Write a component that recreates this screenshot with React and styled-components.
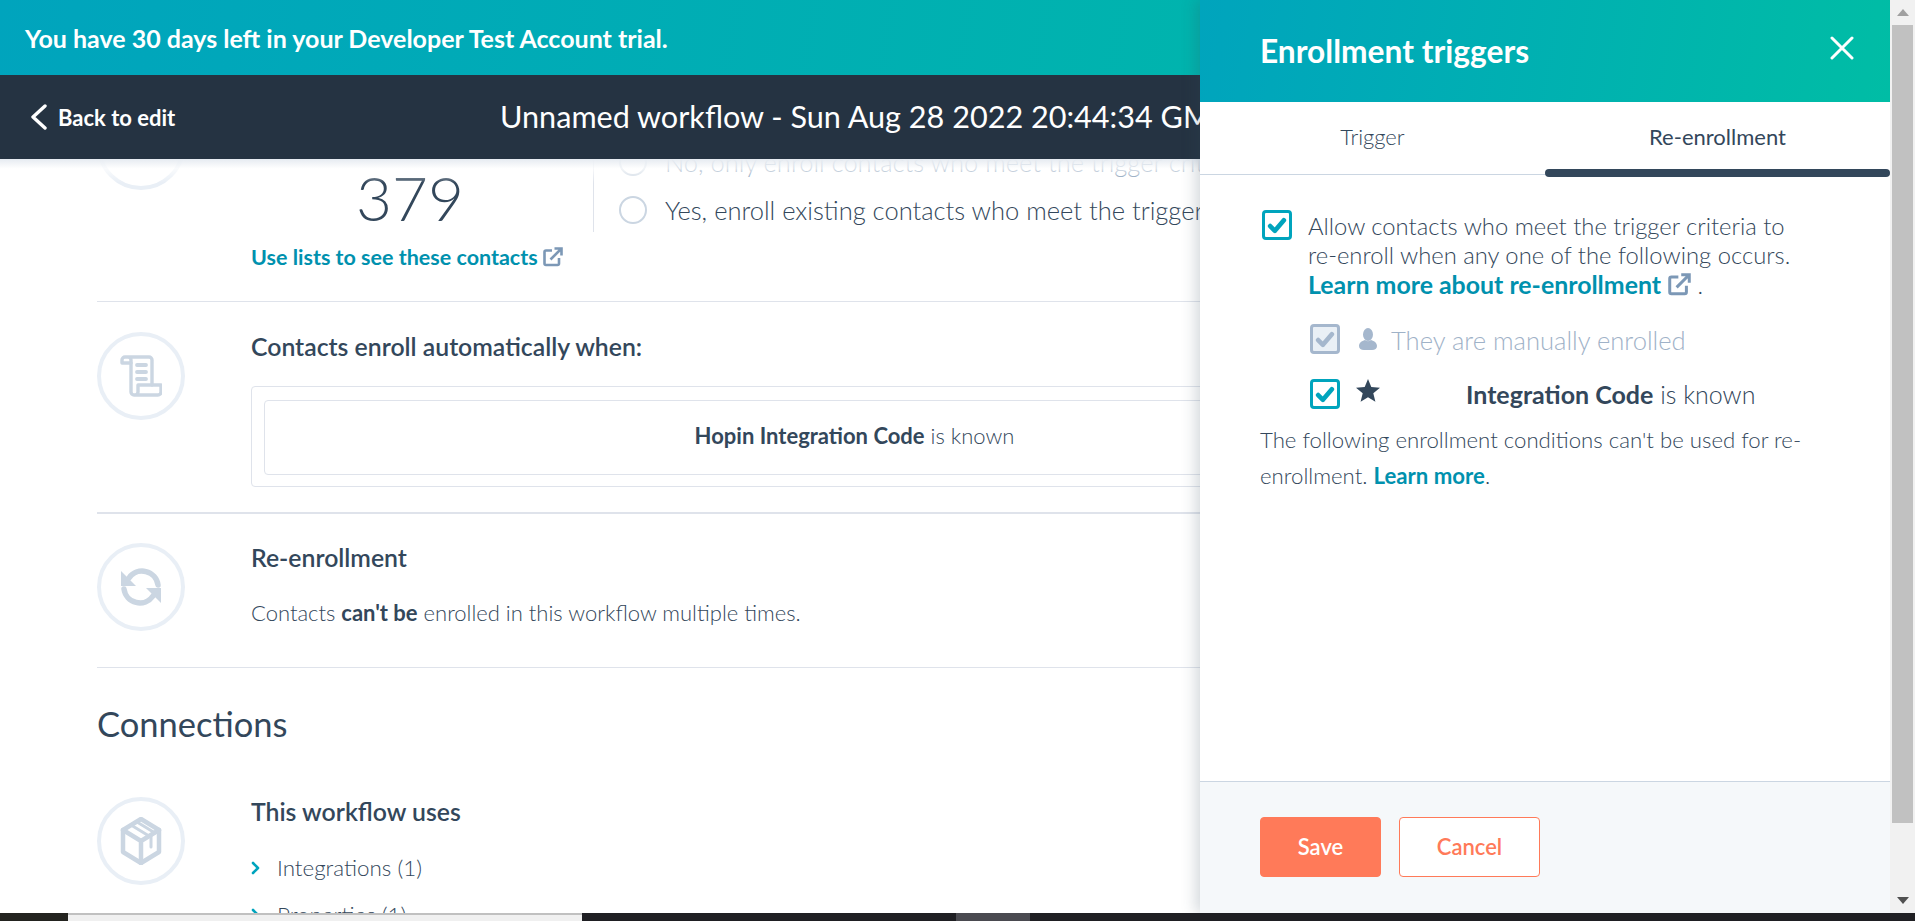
import React from 'react';
import styled, { createGlobalStyle } from 'styled-components';

const GlobalStyle = createGlobalStyle`
  html, body {
    margin: 0;
    padding: 0;
    overflow: hidden;
    background: #fff;
  }
  * { box-sizing: border-box; }
`;

const fontStack = `Lato, "Noto Sans", "Liberation Sans", sans-serif`;

const Page = styled.div`
  width: 1915px;
  height: 921px;
  display: flex;
  flex-direction: column;
  overflow: hidden;
  font-family: ${fontStack};
  color: #33475b;
`;

const Viewport = styled.div`
  flex: 1;
  min-height: 0;
  display: flex;
`;

const Main = styled.div`
  position: relative;
  flex: 1;
  min-width: 0;
  display: flex;
  flex-direction: column;
  overflow: hidden;
`;

const Banner = styled.div`
  height: 75px;
  flex: none;
  display: flex;
  align-items: center;
  padding-left: 25px;
  background: linear-gradient(100deg, #00a4bd 0%, #00bda5 100%);
  color: #fff;
  font-size: 25px;
  font-weight: 700;
`;

const NavBar = styled.div`
  height: 84px;
  flex: none;
  margin-right: 690px;
  display: flex;
  align-items: center;
  padding-left: 31px;
  background: #253342;
  color: #fff;
  overflow: hidden;
  white-space: nowrap;
`;

const BackLink = styled.a`
  width: 469px;
  flex: none;
  display: flex;
  align-items: center;
  gap: 11px;
  font-size: 22px;
  font-weight: 700;
`;

const NavTitle = styled.div`
  font-size: 30.6px;
  font-weight: 400;
  margin-top: -2px;
`;

const ScrollArea = styled.div`
  position: relative;
  flex: 1;
  min-height: 0;
  overflow: hidden;
`;

const TopFade = styled.div`
  position: absolute;
  top: 0;
  left: 0;
  right: 0;
  height: 24px;
  background: linear-gradient(#e6ebf1 0%, rgba(255, 255, 255, 0.75) 40%, rgba(255, 255, 255, 0) 100%);
`;

/* the page is scrolled down a little in the reference */
const ScrollContent = styled.div`
  margin-top: -57px;
  margin-left: 97px;
  width: 1361px;
`;

const Section = styled.div`
  display: grid;
  grid-template-columns: 88px 1fr;
  column-gap: 66px;
  padding: ${({ $pad }) => $pad};
  border-bottom: ${({ $line }) => ($line ? `${$line}px solid #dfe3eb` : 'none')};
`;

const IconCircle = styled.div`
  width: 88px;
  height: 88px;
  border-radius: 50%;
  border: 4px solid #e9eff6;
  display: flex;
  align-items: center;
  justify-content: center;
  color: #cbd6e2;
`;

const StatRow = styled.div`
  display: flex;
  align-items: flex-start;
`;

const StatColumn = styled.div`
  width: 342px;
  flex: none;
  display: flex;
  flex-direction: column;
`;

const StatNumber = styled.div`
  width: 318px;
  text-align: center;
  font-size: 62px;
  font-weight: 300;
  line-height: 72px;
  margin-top: 59px;
`;

const TextLink = styled.a`
  color: #0091ae;
  font-size: ${({ $size }) => ($size ? `${$size}px` : 'inherit')};
  font-weight: 700;
`;

const StatLink = styled(TextLink)`
  display: flex;
  align-items: center;
  gap: 5px;
  line-height: 26px;
  margin-top: 11px;
  white-space: nowrap;
`;

const RadioColumn = styled.div`
  width: 607px;
  height: 130px;
  flex: none;
  overflow: hidden;
  border-left: 1px solid #dfe3eb;
  padding: 45px 0 0 25px;
  display: flex;
  flex-direction: column;
  gap: 18px;
`;

const RadioRow = styled.div`
  display: flex;
  align-items: center;
  gap: 18px;
  font-size: 25.5px;
  font-weight: 300;
  line-height: 30px;
  white-space: nowrap;
  color: ${({ $muted }) => ($muted ? '#6f8ba9' : '#33475b')};
`;

const Radio = styled.span`
  width: 28px;
  height: 28px;
  flex: none;
  border-radius: 50%;
  border: 2px solid #cbd6e2;
  background: #fff;
`;

const SectionBody = styled.div`
  min-width: 0;
`;

const SectionTitle = styled.div`
  font-size: 24.8px;
  font-weight: 600;
  line-height: 30px;
`;

const OuterBox = styled.div`
  margin-top: 24px;
  border: 1px solid #dfe3eb;
  border-radius: 4px;
  padding: 13px 12px 11px;
`;

const InnerBox = styled.div`
  height: 75px;
  border: 1px solid #dfe3eb;
  border-radius: 4px;
  padding-bottom: 5px;
  display: flex;
  align-items: center;
  justify-content: center;
  font-size: 22px;
  font-weight: 300;
`;

const Strong = styled.b`
  font-weight: 700;
`;

const BodyLine = styled.div`
  margin-top: 25px;
  font-size: 22px;
  font-weight: 300;
  line-height: 30px;
`;

const ConnectionsTitle = styled.h2`
  margin: 0;
  padding: 38px 0 55px;
  font-size: 34.5px;
  font-weight: 400;
  line-height: 36px;
`;

const TreeList = styled.div`
  margin-top: 26px;
  display: flex;
  flex-direction: column;
  gap: 17px;
`;

const TreeRow = styled.div`
  display: flex;
  align-items: center;
  gap: 17px;
  font-size: 22.4px;
  font-weight: 300;
  line-height: 30px;
  color: #33475b;
`;

const TreeChevron = styled.svg`
  width: 9px;
  height: 14px;
  color: #00a4bd;
`;

const Panel = styled.div`
  position: absolute;
  top: 0;
  right: 0;
  bottom: 0;
  width: 690px;
  display: flex;
  flex-direction: column;
  background: #fff;
  box-shadow: -4px 0 14px rgba(51, 71, 91, 0.22);
`;

const PanelHeader = styled.div`
  height: 102px;
  flex: none;
  display: flex;
  align-items: center;
  justify-content: space-between;
  padding: 0 36px 0 60px;
  background: linear-gradient(100deg, #00a4bd 0%, #00bda5 100%);
  color: #fff;
`;

const PanelTitle = styled.div`
  font-size: 31.7px;
  font-weight: 700;
`;

const CloseIcon = styled.svg`
  width: 24px;
  height: 24px;
  margin-top: -6px;
`;

const Tabs = styled.div`
  height: 73px;
  flex: none;
  display: flex;
  border-bottom: 1px solid #cbd6e2;
`;

const Tab = styled.div`
  position: relative;
  flex: 1;
  display: flex;
  align-items: center;
  justify-content: center;
  padding-bottom: 4px;
  font-size: 22px;
  font-weight: ${({ $active }) => ($active ? 400 : 300)};
  color: #33475b;

  ${({ $active }) => $active && `
    &::after {
      content: '';
      position: absolute;
      left: 0;
      right: 0;
      bottom: -3px;
      height: 8px;
      border-radius: 4px;
      background: #33475b;
    }
  `}
`;

const PanelBody = styled.div`
  flex: 1;
  min-height: 0;
  padding: 35px 60px 0;
`;

const CheckRow = styled.div`
  display: flex;
  align-items: flex-start;
  margin-left: ${({ $offset }) => $offset || 0}px;
`;

const Check = styled.span`
  width: 30px;
  height: 30px;
  flex: none;
  display: flex;
  align-items: center;
  justify-content: center;
  border-radius: 4px;
  border: 3px solid ${({ $disabled }) => ($disabled ? '#a5b7cd' : '#00a4bd')};
  background: ${({ $disabled }) => ($disabled ? '#eaf0f6' : '#fff')};
  color: ${({ $disabled }) => ($disabled ? '#a5b7cd' : '#00a4bd')};
`;

const AllowText = styled.div`
  margin: 2px 0 0 16px;
  font-size: 23.8px;
  font-weight: 300;
  line-height: 29px;
  white-space: nowrap;
`;

const ExternalIcon = styled.svg`
  width: ${({ $size }) => $size}px;
  height: ${({ $size }) => $size}px;
  flex: none;
  color: #7c98b6;
  vertical-align: -2px;
  margin-left: ${({ $gap }) => $gap || 0}px;
`;

const SubOptions = styled.div`
  margin: 24px 0 0 50px;
  display: flex;
  flex-direction: column;
  gap: 24px;
`;

const RowIcon = styled.span`
  width: 24px;
  margin: ${({ $top }) => $top || 0}px 0 0 16px;
  flex: none;
  display: flex;
  justify-content: center;
  color: ${({ $disabled }) => ($disabled ? '#a5b7cd' : '#33475b')};
`;

const OptionLabel = styled.div`
  font-size: ${({ $size }) => $size}px;
  font-weight: 300;
  line-height: 30px;
  color: ${({ $disabled }) => ($disabled ? '#9fb2c8' : '#33475b')};
  margin-left: ${({ $indent }) => $indent}px;
  margin-top: ${({ $top }) => $top}px;
  white-space: nowrap;
`;

const Note = styled.p`
  margin: 13px 0 0;
  font-size: 22.2px;
  font-weight: 300;
  line-height: 36px;
  width: 570px;
`;

const PanelFooter = styled.div`
  height: 132px;
  flex: none;
  display: flex;
  align-items: center;
  gap: 18px;
  padding: 0 60px 2px;
  background: #f5f8fa;
  border-top: 1px solid #cbd6e2;
`;

const Button = styled.button`
  height: 60px;
  width: ${({ $width }) => $width}px;
  padding: 0;
  border-radius: 4px;
  border: 1px solid #ff7a59;
  background: ${({ $primary }) => ($primary ? '#ff7a59' : '#fff')};
  color: ${({ $primary }) => ($primary ? '#fff' : '#ff7a59')};
  font-family: ${fontStack};
  font-size: 22px;
  font-weight: 600;
`;

const Scrollbar = styled.div`
  width: 25px;
  flex: none;
  display: flex;
  flex-direction: column;
  align-items: center;
  background: #f1f1f1;
`;

const ScrollArrow = styled.div`
  height: 25px;
  flex: none;
  display: flex;
  align-items: center;
  justify-content: center;
`;

const ScrollThumb = styled.div`
  width: 21px;
  height: 798px;
  flex: none;
  background: #c1c1c1;
`;

const ScrollSpacer = styled.div`
  flex: 1;
`;

const Taskbar = styled.div`
  height: 8px;
  flex: none;
  display: flex;
  background: #1f1f23;
`;

const TaskItem = styled.div`
  width: ${({ $width }) => $width}px;
  margin-left: ${({ $left }) => $left || 0}px;
  background: ${({ $bg }) => $bg};
  border-top: ${({ $edge }) => ($edge ? '2px solid #c0c0c0' : 'none')};
`;

const External = ({ size, gap }) => (
  <ExternalIcon $size={size} $gap={gap} viewBox="0 0 20 20" fill="none" stroke="currentColor" strokeWidth="2.6">
    <path d="M9 3.500H3a1.500 1.500 0 0 0-1.500 1.500v11.500A1.500 1.500 0 0 0 3 18h11.500a1.500 1.500 0 0 0 1.500-1.500V11" />
    <path d="M7.500 12.500 18 2M11.500 1.500H18.500V8.500" />
  </ExternalIcon>
);

const Tick = () => (
  <svg width="20" height="17" viewBox="0 0 19 16" fill="none" stroke="currentColor" strokeWidth="4.4" strokeLinecap="round" strokeLinejoin="round">
    <path d="M3 8.500 7.500 13 16 3" />
  </svg>
);

const Chevron = () => (
  <TreeChevron viewBox="0 0 9 14" fill="none" stroke="currentColor" strokeWidth="2.6" strokeLinecap="round" strokeLinejoin="round">
    <path d="M2 2l5 5-5 5" />
  </TreeChevron>
);

const ScrollIcon = () => (
  <svg width="42" height="42" viewBox="0 0 42 42" fill="none" stroke="currentColor" strokeWidth="3.4" strokeLinejoin="round" strokeLinecap="round">
    <path d="M5 2h24a3 3 0 0 1 3 3v25M5 2a3 3 0 0 0-3 3v3h9V5a3 3 0 0 0-3-3" />
    <path d="M11 8v29a3 3 0 0 0 3 3h24a3 3 0 0 0 3-3v-7H18v7a3 3 0 0 1-3 3" />
    <path d="M17 10h9M17 17h9M17 24h9" strokeWidth="3.800" />
  </svg>
);

const RefreshIcon = () => (
  <svg width="42" height="42" viewBox="0 0 42 42" fill="none" stroke="currentColor" strokeWidth="5.500" strokeLinecap="round">
    <path d="M9 12a16 16 0 0 1 29 7" />
    <path d="M33 30a16 16 0 0 1-29-7" />
    <path d="M1 5v15h15z" fill="currentColor" stroke="none" />
    <path d="M41 37V22H26z" fill="currentColor" stroke="none" />
  </svg>
);

const BoxIcon = () => (
  <svg width="42" height="48" viewBox="0 0 42 48" fill="none" stroke="currentColor" strokeWidth="4.500" strokeLinejoin="round" strokeLinecap="round">
    <path d="M21 2 39 13v22L21 46 3 35V13z" />
    <path d="M3 13l18 11 18-11M21 24v22" />
    <path d="M11 8l18 11M17 5l18 11" strokeWidth="3" />
    <path d="M31 19v11" strokeWidth="3" />
  </svg>
);

const PersonIcon = () => (
  <svg width="18" height="22" viewBox="0 0 18 22" fill="currentColor">
    <ellipse cx="9" cy="6.500" rx="5" ry="6.500" />
    <path d="M6 12c-3.500 1-6 3-6 6 0 2.500 2 4 5 4h8c3 0 5-1.500 5-4 0-3-2.500-5-6-6-1.500 1.500-4.500 1.500-6 0z" />
  </svg>
);

const StarIcon = () => (
  <svg width="24" height="23" viewBox="0 0 24 23" fill="currentColor">
    <path d="M12 0l3.300 8.100 8.700.6-6.700 5.600 2.100 8.500L12 18.200 4.600 22.800l2.100-8.500L0 8.700l8.700-.6z" />
  </svg>
);

export default function App() {
  return (
    <Page>
      <GlobalStyle />
      <Viewport>
        <Main>
          <Banner>You have 30 days left in your Developer Test Account trial.</Banner>
          <NavBar>
            <BackLink>
              <svg width="16" height="26" viewBox="0 0 16 26" fill="none" stroke="#fff" strokeWidth="3.400" strokeLinecap="round" strokeLinejoin="round">
                <path d="M14 2 2 13l12 11" />
              </svg>
              Back to edit
            </BackLink>
            <NavTitle>Unnamed workflow - Sun Aug 28 2022 20:44:34 GMT+0100 (British Summer Time)</NavTitle>
          </NavBar>
          <ScrollArea>
            <ScrollContent>
              <Section $line={1} $pad="0 0 31px">
                <IconCircle />
                <StatRow>
                  <StatColumn>
                    <StatNumber>379</StatNumber>
                    <StatLink $size={21.5}>
                      Use lists to see these contacts
                      <External size={20} />
                    </StatLink>
                  </StatColumn>
                  <RadioColumn>
                    <RadioRow $muted>
                      <Radio />
                      No, only enroll contacts who meet the trigger criteria going forward
                    </RadioRow>
                    <RadioRow>
                      <Radio />
                      Yes, enroll existing contacts who meet the trigger criteria as of now
                    </RadioRow>
                  </RadioColumn>
                </StatRow>
              </Section>
              <Section $line={2} $pad="30px 0 25px">
                <IconCircle>
                  <ScrollIcon />
                </IconCircle>
                <SectionBody>
                  <SectionTitle>Contacts enroll automatically when:</SectionTitle>
                  <OuterBox>
                    <InnerBox>
                      <span>
                        <Strong>Hopin Integration Code</Strong> is known
                      </span>
                    </InnerBox>
                  </OuterBox>
                </SectionBody>
              </Section>
              <Section $line={1} $pad="29px 0 36px">
                <IconCircle>
                  <RefreshIcon />
                </IconCircle>
                <SectionBody>
                  <SectionTitle>Re-enrollment</SectionTitle>
                  <BodyLine>
                    Contacts <Strong>can't be</Strong> enrolled in this workflow multiple times.
                  </BodyLine>
                </SectionBody>
              </Section>
              <ConnectionsTitle>Connections</ConnectionsTitle>
              <Section>
                <IconCircle>
                  <BoxIcon />
                </IconCircle>
                <SectionBody>
                  <SectionTitle>This workflow uses</SectionTitle>
                  <TreeList>
                    <TreeRow>
                      <Chevron />
                      Integrations (1)
                    </TreeRow>
                    <TreeRow>
                      <Chevron />
                      Properties (1)
                    </TreeRow>
                  </TreeList>
                </SectionBody>
              </Section>
            </ScrollContent>
            <TopFade />
          </ScrollArea>
          <Panel>
            <PanelHeader>
              <PanelTitle>Enrollment triggers</PanelTitle>
              <CloseIcon viewBox="0 0 24 24" fill="none" stroke="#fff" strokeWidth="3" strokeLinecap="round">
                <path d="M2 2l20 20M22 2 2 22" />
              </CloseIcon>
            </PanelHeader>
            <Tabs>
              <Tab>Trigger</Tab>
              <Tab $active>Re-enrollment</Tab>
            </Tabs>
            <PanelBody>
              <CheckRow $offset={2}>
                <Check>
                  <Tick />
                </Check>
                <AllowText>
                  Allow contacts who meet the trigger criteria to
                  <br />
                  re-enroll when any one of the following occurs.
                  <br />
                  <TextLink $size={24.9}>
                    Learn more about re-enrollment
                    <External size={23} gap={7} />
                  </TextLink>{' '}
                  .
                </AllowText>
              </CheckRow>
              <SubOptions>
                <CheckRow>
                  <Check $disabled>
                    <Tick />
                  </Check>
                  <RowIcon $disabled $top={4}>
                    <PersonIcon />
                  </RowIcon>
                  <OptionLabel $disabled $size={25.6} $indent={11} $top={1}>
                    They are manually enrolled
                  </OptionLabel>
                </CheckRow>
                <CheckRow>
                  <Check>
                    <Tick />
                  </Check>
                  <RowIcon>
                    <StarIcon />
                  </RowIcon>
                  <OptionLabel $size={25} $indent={86} $top={0}>
                    <Strong>Integration Code</Strong> is known
                  </OptionLabel>
                </CheckRow>
              </SubOptions>
              <Note>
                The following enrollment conditions can't be used for re-enrollment.{' '}
                <TextLink>Learn more</TextLink>.
              </Note>
            </PanelBody>
            <PanelFooter>
              <Button $primary $width={121}>Save</Button>
              <Button $width={141}>Cancel</Button>
            </PanelFooter>
          </Panel>
        </Main>
        <Scrollbar>
          <ScrollArrow>
            <svg width="12" height="7" viewBox="0 0 12 7" fill="#a0a0a0">
              <path d="M6 0l6 7H0z" />
            </svg>
          </ScrollArrow>
          <ScrollThumb />
          <ScrollSpacer />
          <ScrollArrow>
            <svg width="12" height="7" viewBox="0 0 12 7" fill="#505050">
              <path d="M0 0h12L6 7z" />
            </svg>
          </ScrollArrow>
        </Scrollbar>
      </Viewport>
      <Taskbar>
        <TaskItem $width={68} $bg="#23231f" />
        <TaskItem $width={514} $bg="#f0f0f0" $edge />
        <TaskItem $width={74} $left={374} $bg="#4a4a50" />
      </Taskbar>
    </Page>
  );
}
